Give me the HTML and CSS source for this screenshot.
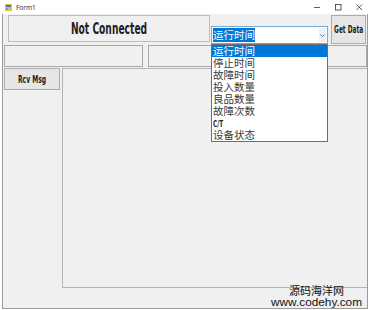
FILE: index.html
```html
<!DOCTYPE html>
<html lang="zh-CN">
<head>
  <meta charset="UTF-8">
  <title>Form1</title>
  <link rel="stylesheet" href="styles.css">
</head>
<body>
  <div class="window">
    <div class="titlebar">
      <svg class="app-icon" width="7" height="7" viewBox="0 0 7 7">
        <rect x="0" y="0" width="7" height="7" fill="#e8c14a"/>
        <rect x="1" y="1" width="5" height="2" fill="#3a78c8"/>
        <rect x="1" y="4" width="2" height="2" fill="#6aa0d8"/>
      </svg>
      <span class="title">Form1</span>
      <div class="controls">
        <svg width="8" height="8" viewBox="0 0 8 8"><line x1="1" y1="4.5" x2="7" y2="4.5" stroke="#333" stroke-width="0.8"/></svg>
        <svg width="8" height="8" viewBox="0 0 8 8"><rect x="1.5" y="1.5" width="5.5" height="5.5" fill="none" stroke="#333" stroke-width="0.8"/></svg>
        <svg width="8" height="8" viewBox="0 0 8 8"><path d="M1.5 1.5 L7 7 M7 1.5 L1.5 7" stroke="#333" stroke-width="0.8"/></svg>
      </div>
    </div>

    <div class="client">
      <div class="row row-top">
        <div class="status"><span>Not Connected</span></div>
        <div class="combo">
          <span class="combo-text">运行时间</span>
          <span class="combo-arrow">
            <svg width="5" height="3" viewBox="0 0 5 3"><path d="M0.5 0.5 L2.5 2.5 L4.5 0.5" fill="none" stroke="#555" stroke-width="0.8"/></svg>
          </span>
        </div>
        <button class="btn btn-get"><span>Get Data</span></button>
      </div>

      <div class="row row-boxes">
        <div class="textbox tb-left"></div>
        <div class="textbox tb-right"></div>
      </div>

      <div class="row row-main">
        <button class="btn btn-rcv"><span>Rcv Msg</span></button>
        <div class="msg-panel"></div>
      </div>

      <ul class="dropdown">
        <li class="selected">运行时间</li>
        <li>停止时间</li>
        <li>故障时间</li>
        <li>投入数量</li>
        <li>良品数量</li>
        <li>故障次数</li>
        <li class="latin"><span>C/T</span></li>
        <li>设备状态</li>
      </ul>
    </div>

    <div class="watermark">
      <div class="wm-cn">源码海洋网</div>
      <div class="wm-url">www.codehy.com</div>
    </div>
  </div>
</body>
</html>
```

FILE: styles.css
```css
:root {
  --form-bg: #f0f0f0;
  --btn-bg: #e6e6e6;
  --btn-border: #adadad;
  --box-border: #a8a8a8;
  --frame: #9c9c9c;
  --select: #0078d7;
  --text: #1e1e1e;
}
* { box-sizing: border-box; margin: 0; padding: 0; }
body {
  background: #fff;
  font-family: "Liberation Sans", Arial, sans-serif;
  color: var(--text);
}
.window {
  position: relative;
  width: 369px;
  height: 310px;
  display: flex;
  flex-direction: column;
}

/* title bar */
.titlebar {
  height: 14px;
  display: flex;
  align-items: center;
  padding-left: 5px;
  background: #fff;
}
.app-icon { margin-right: 4px; }
.title {
  font-family: "Noto Sans", sans-serif;
  font-size: 6.5px;
  color: #333;
}
.controls {
  margin-left: auto;
  display: flex;
  gap: 13px;
  padding-right: 6px;
}

/* client area */
.client {
  position: relative;
  flex: 1;
  margin: 0 1px 1px 2px;
  background: var(--form-bg);
  border: 1px solid var(--frame);
  border-top: none;
  display: flex;
  flex-direction: column;
}
.row { display: flex; }
.row-top { height: 30px; }
.row-boxes { height: 24px; }
.row-main { height: 220px; }

.status {
  margin: 1px 0 0 5px;
  width: 202px;
  height: 27px;
  border: 1px solid #bdbdbd;
  background: var(--form-bg);
  display: flex;
  align-items: center;
  justify-content: center;
}
.status span,
.btn span,
.dropdown li.latin span {
  display: inline-block;
  font-family: "DejaVu Sans Condensed", "DejaVu Sans", sans-serif;
  font-weight: bold;
  white-space: nowrap;
}
.status span {
  font-size: 16px;
  transform: scaleX(0.635);
}

.combo {
  align-self: flex-end;
  margin-left: 1px;
  width: 117px;
  height: 18px;
  background: #fff;
  border: 1px solid #7aa7d6;
  display: flex;
  align-items: center;
  padding-left: 1px;
}
.combo-text {
  font-family: "Noto Sans CJK SC", sans-serif;
  font-size: 10.5px;
  line-height: 14px;
  background: var(--select);
  color: #fff;
}
.combo-arrow {
  margin-left: auto;
  width: 7px;
  height: 14px;
  margin-right: 1px;
  display: flex;
  align-items: center;
  justify-content: center;
  background: #e5f1fb;
}

.btn {
  background: var(--btn-bg);
  border: 1px solid var(--btn-border);
  color: var(--text);
  display: flex;
  align-items: center;
  justify-content: center;
}
.btn-get {
  margin: 1px 0 0 3px;
  width: 35px;
  height: 29px;
}
.btn-get span { font-size: 11px; transform: scaleX(0.59); }
.btn-rcv {
  margin-left: 1px;
  width: 56px;
  height: 22px;
}
.btn-rcv span { font-size: 10px; transform: scaleX(0.67); }

.textbox {
  margin-top: 1px;
  height: 22px;
  border: 1px solid var(--box-border);
  background: var(--form-bg);
}
.tb-left { margin-left: 1px; width: 139px; }
.tb-right { margin-left: 5px; flex: 1; }

.msg-panel {
  margin-left: 2px;
  flex: 1;
  border: 1px solid #b4b4b4;
  border-right: none;
}

/* open combo list */
.dropdown {
  position: absolute;
  left: 208px;
  top: 30px;
  width: 117px;
  height: 98px;
  list-style: none;
  background: #fff;
  border: 1px solid #6e6e6e;
}
.dropdown li {
  height: 12px;
  line-height: 12px;
  padding-left: 1px;
  font-family: "Noto Sans CJK SC", sans-serif;
  font-size: 10.5px;
  color: #3a3a3a;
}
.dropdown li.selected {
  background: var(--select);
  color: #fff;
}
.dropdown li.latin span {
  font-size: 9px;
  color: #222;
  transform: scaleX(0.7);
  transform-origin: left center;
}

.watermark {
  position: absolute;
  right: 7px;
  bottom: 2px;
  text-align: center;
  color: #111;
}
.wm-cn {
  font-family: "Noto Sans CJK SC", sans-serif;
  font-size: 11px;
  line-height: 12px;
}
.wm-url {
  font-family: "Liberation Sans", sans-serif;
  font-size: 11.8px;
  line-height: 12px;
}
```
